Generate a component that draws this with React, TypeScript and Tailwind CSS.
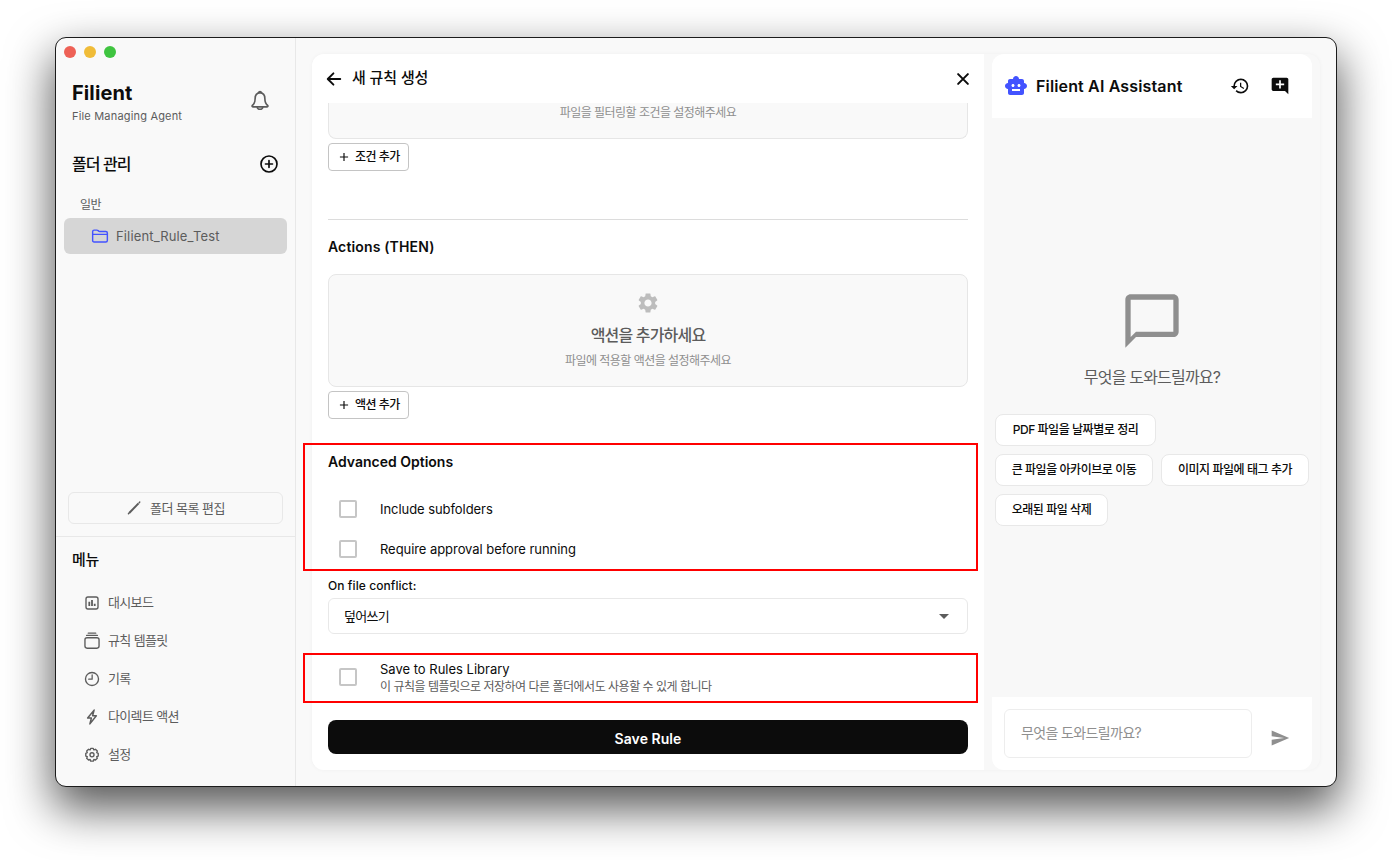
import type { ReactNode } from "react";
import {
  MdAdd,
  MdAddComment,
  MdArrowDropDown,
  MdChatBubbleOutline,
  MdHistory,
  MdSend,
  MdSettings,
  MdSmartToy,
} from "react-icons/md";

function Line({ size, children, className = "" }: { size: number; children: ReactNode; className?: string }) {
  return (
    <svg
      width={size}
      height={size}
      viewBox="0 0 24 24"
      fill="none"
      stroke="currentColor"
      strokeLinecap="round"
      strokeLinejoin="round"
      className={className}
    >
      {children}
    </svg>
  );
}

const menu: { label: string; icon: ReactNode }[] = [
  {
    label: "대시보드",
    icon: (
      <Line size={18}>
        <rect x="4" y="4" width="16" height="16" rx="2.6" strokeWidth="1.8" />
        <path d="M8.4 10.4V16M12 8V16M15.600 13V16" strokeWidth="2.4" strokeLinecap="butt" />
      </Line>
    ),
  },
  {
    label: "규칙 템플릿",
    icon: (
      <Line size={18}>
        <rect x="2.6" y="7.6" width="18.8" height="14" rx="2.8" strokeWidth="1.8" />
        <path d="M4.800 4.600h14.400M7 1.600h10" strokeWidth="1.7" />
      </Line>
    ),
  },
  {
    label: "기록",
    icon: (
      <Line size={18}>
        <circle cx="12" cy="12" r="8.7" strokeWidth="1.8" />
        <path d="M12.2 6.4v5.800H7.600" strokeWidth="1.7" />
      </Line>
    ),
  },
  {
    label: "다이렉트 액션",
    icon: (
      <Line size={18}>
        <path d="M14.800 2.800 6.200 13.400h5L9.200 21.200l8.600-10.800h-5z" strokeWidth="2" />
      </Line>
    ),
  },
  {
    label: "설정",
    icon: (
      <Line size={18}>
        <path
          d="M10.3 3.2h3.4l.8 2 2.1-.8 2.5 2.4-.8 2.1 2 .9v3.6l-2 .9.8 2.1-2.5 2.4-2.1-.8-.8 2.2h-3.4l-.8-2.2-2.1.8-2.5-2.4.8-2.1-2-.9V9.8l2-.9-.8-2.1 2.5-2.4 2.1.8z"
          strokeWidth="1.8"
        />
        <circle cx="12" cy="11.7" r="2.7" strokeWidth="1.8" />
      </Line>
    ),
  },
];

function AddButton({ label }: { label: string }) {
  return (
    <button className="mt-1 flex h-7 w-[81px] items-center rounded border border-[#c4c4c4] bg-white pl-2 text-[12px] font-medium tracking-[-0.5px] text-[#0c0c0c]">
      <MdAdd size={14} />
      <span className="ml-1 whitespace-nowrap">{label}</span>
    </button>
  );
}

function Box() {
  return <span className="ml-[11px] size-[18px] shrink-0 rounded-[2px] border-2 border-[#c6c6c6] bg-white" />;
}

function Chip({ label, className }: { label: string; className: string }) {
  return (
    <button
      className={`flex h-8 items-center justify-center whitespace-nowrap rounded-lg border border-[#e8e8e8] bg-white text-[12px] font-medium tracking-[-0.45px] text-[#0c0c0c] ${className}`}
    >
      {label}
    </button>
  );
}

function Sidebar() {
  return (
    <aside className="flex w-60 shrink-0 flex-col border-r border-[#e8e8e8]">
      <div className="flex gap-2 pl-2 pt-2">
        <span className="size-3 rounded-full bg-[#ee6156]" />
        <span className="size-3 rounded-full bg-[#f0bc38]" />
        <span className="size-3 rounded-full bg-[#3fc440]" />
      </div>
      <div className="mt-[22px] flex h-[46px] items-center justify-between pl-4 pr-6">
        <div>
          <h1 className="text-[20px] font-bold leading-[26px] tracking-[0.1px]">Filient</h1>
          <p className="text-[11px] leading-5 tracking-[0.18px] text-[#5c5c5c]">File Managing Agent</p>
        </div>
        <Line size={22} className="mt-[-4px] text-[#5c5c5c]">
          <path
            d="M12 2.8c-3.4.4-5.3 3-5.3 6.400 0 4.400-1.300 6.300-3.100 7.700-.5.500-.3 1.500.6 1.500h15.600c.9 0 1.100-1 .6-1.500-1.800-1.400-3.100-3.300-3.100-7.700 0-3.400-1.900-6-5.300-6.400z"
            strokeWidth="1.8"
          />
          <path d="M10.3 2.9a1.800 1.800 0 0 1 3.400 0M9 18.800c.3 3 5.700 3 6 0" strokeWidth="1.8" />
        </Line>
      </div>
      <div className="mt-[26px] flex h-6 items-center justify-between pl-4 pr-4">
        <h2 className="text-[16px] font-medium tracking-[-0.9px]">폴더 관리</h2>
        <Line size={20}>
          <circle cx="12" cy="12" r="9.6" strokeWidth="2" />
          <path d="M12 7.8v8.4M7.800 12h8.400" strokeWidth="2" />
        </Line>
      </div>
      <p className="mt-[19px] pl-6 text-[12px] leading-5 tracking-[-0.6px] text-[#5c5c5c]">일반</p>
      <div className="ml-2 mt-[3px] flex h-9 w-[223px] items-center rounded-md bg-[#d6d6d6] pl-[27px] text-[#5c5c5c]">
        <Line size={18} className="text-[#4353ff]">
          <path
            d="M2.200 18V6.200c0-1.300.8-2 2-2h3.600c.7 0 1.200.2 1.700.6l.8.700c.4.3.8.4 1.300.4h8.200c1.300 0 2 .7 2 2V18c0 1.300-.7 2-2 2H4.200c-1.300 0-2-.7-2-2zM2.200 9.800h19.600"
            strokeWidth="1.9"
          />
        </Line>
        <span className="ml-[7px] pt-[2px] text-[13px] tracking-[0.15px]">Filient_Rule_Test</span>
      </div>
      <div className="flex-1" />
      <button className="mx-3 mb-3 flex h-8 w-[215px] items-center justify-center rounded-md border border-[#e8e8e8] text-[13px] tracking-[-0.5px] text-[#5c5c5c]">
        <Line size={16}>
          <path d="M4.800 19.500 18.800 5" strokeWidth="3" strokeLinecap="butt" />
          <path d="M19.800 4l.8-.9M3.700 20.600l.8-.900" strokeWidth="2.200" />
        </Line>
        <span className="ml-2 pt-px">폴더 목록 편집</span>
      </button>
      <nav className="h-[250px] border-t border-[#e8e8e8] pt-[11px]">
        <h2 className="pl-4 text-[15px] font-medium leading-6 tracking-[-0.3px]">메뉴</h2>
        <ul className="mt-3">
          {menu.map((m) => (
            <li key={m.label} className="flex h-[38px] items-center pl-[27px] text-[13px] tracking-[-0.65px] text-[#5c5c5c]">
              {m.icon}
              <span className="ml-[7px] pb-px">{m.label}</span>
            </li>
          ))}
        </ul>
      </nav>
    </aside>
  );
}

function RuleForm() {
  return (
    <section className="flex w-[672px] shrink-0 flex-col bg-white">
      <header className="flex h-[49px] shrink-0 items-center pl-3 pr-3">
        <Line size={20}>
          <path d="M19.500 12H5M11.300 5.200 4.500 12l6.800 6.800" strokeWidth="2.300" />
        </Line>
        <h2 className="ml-2 flex-1 text-[15px] font-medium tracking-[-0.1px]">새 규칙 생성</h2>
        <Line size={18}>
          <path d="M5.500 5.500l13 13M18.500 5.500l-13 13" strokeWidth="2.700" />
        </Line>
      </header>
      <div className="flex flex-1 flex-col px-4">
        <div className="flex h-9 justify-center rounded-b-lg border border-t-0 border-[#e6e6e6] bg-[#f9f9f9] text-[12px] leading-5 tracking-[-0.53px] text-[#8f8f8f]">
          파일을 필터링할 조건을 설정해주세요
        </div>
        <AddButton label="조건 추가" />
        <hr className="mt-12 border-[#dcdcdc]" />
        <h3 className="mt-[17px] text-[14px] font-semibold leading-5 tracking-[0.15px]">Actions (THEN)</h3>
        <div className="mt-[17px] flex h-[113px] flex-col items-center rounded-lg border border-[#e6e6e6] bg-[#f9f9f9] pt-4">
          <MdSettings size={24} className="text-[#bdbdbd]" />
          <p className="mt-2 text-[16px] font-medium leading-6 tracking-[-0.83px] text-[#5c5c5c]">액션을 추가하세요</p>
          <p className="mt-[5px] text-[12px] leading-[18px] tracking-[-0.53px] text-[#8f8f8f]">파일에 적용할 액션을 설정해주세요</p>
        </div>
        <AddButton label="액션 추가" />
        <h3 className="mt-[33px] text-[14px] font-semibold leading-5">Advanced Options</h3>
        <label className="mt-[17px] flex h-10 items-center text-[13px] tracking-[-0.06px]">
          <Box />
          <span className="ml-[23px] pt-[2px]">Include subfolders</span>
        </label>
        <label className="flex h-10 items-center text-[13px] tracking-[-0.06px]">
          <Box />
          <span className="ml-[23px] pt-[2px]">Require approval before running</span>
        </label>
        <p className="mt-[7px] text-[12px] font-medium leading-5 tracking-[0.08px]">On file conflict:</p>
        <div className="mt-[2px] flex h-9 items-center justify-between rounded-md border border-[#e8e8e8] pl-[15px] pr-[11px] text-[12px]">
          <span className="pt-px text-[13px] tracking-[-0.75px]">덮어쓰기</span>
          <MdArrowDropDown size={24} className="text-[#5c5c5c]" />
        </div>
        <label className="mt-[23px] flex h-10 items-center">
          <Box />
          <span className="ml-[23px] flex flex-col pt-px">
            <span className="text-[13px] leading-[18px]">Save to Rules Library</span>
            <span className="text-[12px] leading-[18px] tracking-[-0.5px] text-[#5c5c5c]">
              이 규칙을 템플릿으로 저장하여 다른 폴더에서도 사용할 수 있게 합니다
            </span>
          </span>
        </label>
        <button className="mt-[23px] h-[34px] rounded-lg bg-[#0c0c0c] pt-[3px] text-[14px] font-semibold tracking-[0.05px] text-white">
          Save Rule
        </button>
      </div>
    </section>
  );
}

function Assistant() {
  return (
    <section className="ml-2 flex w-80 flex-col overflow-hidden rounded-xl">
      <header className="flex h-16 shrink-0 items-center bg-white pl-3 pr-[22px]">
        <MdSmartToy size={24} className="text-[#4353ff]" />
        <h2 className="ml-2 flex-1 text-[16px] font-semibold tracking-[0.15px]">Filient AI Assistant</h2>
        <MdHistory size={20} />
        <MdAddComment size={20} className="ml-5" />
      </header>
      <div className="flex flex-1 flex-col items-center pt-[171px]">
        <MdChatBubbleOutline size={64} className="text-[#8f8f8f]" />
        <p className="mt-3 text-[16px] leading-6 tracking-[-0.8px] text-[#5c5c5c]">무엇을 도와드릴까요?</p>
        <div className="mt-[25px] flex w-[320px] flex-wrap gap-2 self-start pl-[3px]">
          <Chip label="PDF 파일을 날짜별로 정리" className="w-[161px]" />
          <Chip label="큰 파일을 아카이브로 이동" className="w-[158px]" />
          <Chip label="이미지 파일에 태그 추가" className="w-[148px]" />
          <Chip label="오래된 파일 삭제" className="w-[113px]" />
        </div>
      </div>
      <footer className="flex h-[73px] shrink-0 items-center bg-white pl-3">
        <div className="flex h-[49px] w-[248px] items-center rounded-md border-[1.5px] border-[#ededed] pb-[2px] pl-4 text-[14px] tracking-[-0.63px] text-[#8f8f8f]">
          무엇을 도와드릴까요?
        </div>
        <MdSend size={20} className="ml-[18px] mt-2 text-[#8f8f8f]" />
      </footer>
    </section>
  );
}

export default function App() {
  return (
    <div className="flex h-[860px] w-[1392px] overflow-hidden bg-white pl-[55px] pt-[37px] text-[#0c0c0c] [font-family:Inter,'Noto_Sans_CJK_KR',sans-serif]">
      <div className="relative flex h-[750px] w-[1282px] rounded-[11px] border border-[#1c1c1c] bg-[#f9f9f9] shadow-[0_20px_46px_2px_rgba(0,0,0,0.66)]">
        <Sidebar />
        <main className="flex flex-1 p-4">
          <div className="flex flex-1 overflow-hidden rounded-xl bg-[#f8f8f8] shadow-[0_0_4px_rgba(0,0,0,0.04)]">
            <RuleForm />
            <Assistant />
          </div>
        </main>
        <div className="absolute left-[247px] top-[405px] h-32 w-[675px] border-2 border-[#ff0000]" />
        <div className="absolute left-[247px] top-[615px] h-[50px] w-[675px] border-2 border-[#ff0000]" />
      </div>
    </div>
  );
}
